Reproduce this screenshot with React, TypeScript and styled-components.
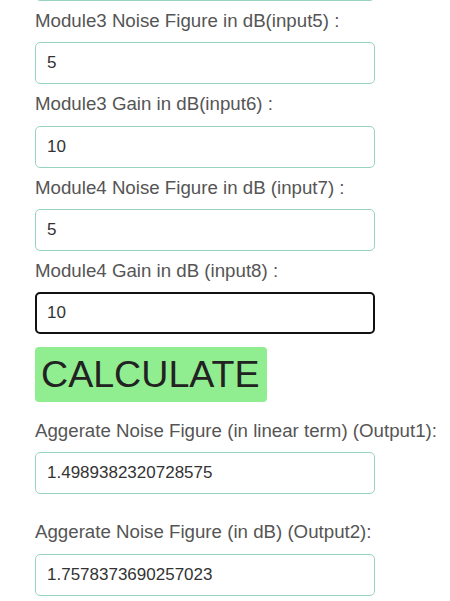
import React, { useState } from "react";
import styled, { createGlobalStyle } from "styled-components";

const GlobalStyle = createGlobalStyle`
  body {
    margin: 0;
    background: #fff;
    font-family: "Liberation Sans", Arial, sans-serif;
  }
`;

// the page is scrolled a little, so the first field sits mostly above the window
const Form = styled.div`
  display: flex;
  flex-direction: column;
  align-items: flex-start;
  padding: 0 35px;
  margin-top: -76.3px;
`;

const Label = styled.label`
  display: block;
  white-space: nowrap;
  font-size: 18.7px;
  line-height: 28px;
  color: #555;
  margin-bottom: 7.3px;
`;

const Field = styled.input<{ $spaced?: boolean }>`
  box-sizing: border-box;
  width: 340px;
  height: 42px;
  padding: 0 11px;
  border: 1px solid #98d3bf;
  border-radius: 5px;
  font-family: "Liberation Sans", Arial, sans-serif;
  font-size: 17px;
  color: #333;
  background: #fff;
  outline: none;
  margin-bottom: ${(p) => (p.$spaced ? "24px" : "6px")};

  &.active {
    border: 2px solid #111;
    padding: 0 10px;
  }
`;

const CalcButton = styled.button`
  margin: 7px 0 15px;
  height: 55px;
  padding: 0 7px 0 6px;
  border: none;
  border-radius: 4px;
  background: #90ee90;
  color: #222;
  font-family: "Liberation Sans", Arial, sans-serif;
  font-size: 37.6px;
  line-height: 55px;
  cursor: pointer;
`;

const inputs = [
  { label: "Module2 Gain in dB (input4) :", value: "10" },
  { label: "Module3 Noise Figure in dB(input5) :", value: "5" },
  { label: "Module3 Gain in dB(input6) :", value: "10" },
  { label: "Module4 Noise Figure in dB (input7) :", value: "5" },
  { label: "Module4 Gain in dB (input8) :", value: "10" },
];

const App: React.FC = () => {
  const [values, setValues] = useState(inputs.map((i) => i.value));

  return (
    <>
      <GlobalStyle />
      <Form>
        {inputs.map((item, idx) => (
          <React.Fragment key={item.label}>
            <Label>{item.label}</Label>
            <Field
              className={idx === inputs.length - 1 ? "active" : undefined}
              value={values[idx]}
              onChange={(e) => {
                const next = [...values];
                next[idx] = e.target.value;
                setValues(next);
              }}
            />
          </React.Fragment>
        ))}
        <CalcButton>CALCULATE</CalcButton>
        <Label>Aggerate Noise Figure (in linear term) (Output1):</Label>
        <Field $spaced readOnly value="1.4989382320728575" />
        <Label>Aggerate Noise Figure (in dB) (Output2):</Label>
        <Field readOnly value="1.7578373690257023" />
      </Form>
    </>
  );
};

export default App;
